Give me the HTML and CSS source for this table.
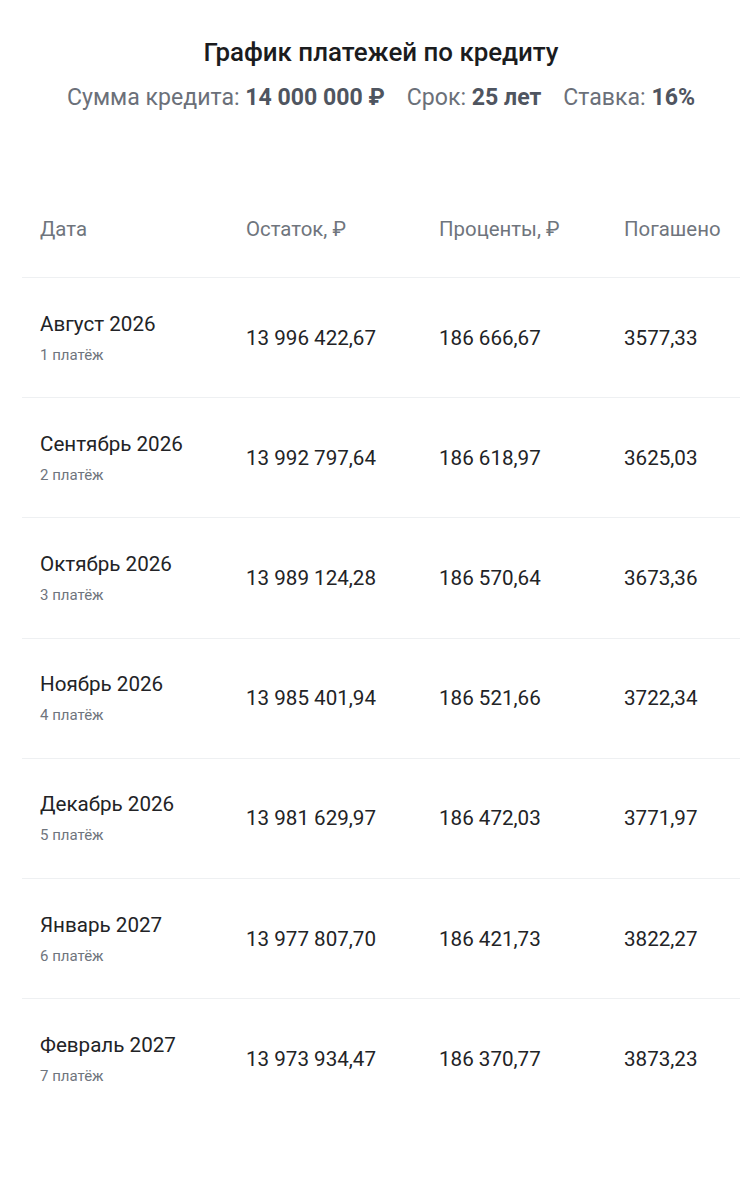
FILE: index.html
```html
<!DOCTYPE html>
<html lang="ru">
<head>
<meta charset="utf-8">
<title>График платежей по кредиту</title>
<link rel="stylesheet" href="styles.css">
</head>
<body>
<div class="page">
  <h1 class="title">График платежей по кредиту</h1>
  <p class="summary">
    <span class="item">Сумма кредита: <b>14 000 000 ₽</b></span>
    <span class="item">Срок: <b>25 лет</b></span>
    <span class="item">Ставка: <b>16%</b></span>
  </p>
  <div class="table">
    <div class="row head">
      <div class="cell">Дата</div>
      <div class="cell">Остаток, ₽</div>
      <div class="cell">Проценты, ₽</div>
      <div class="cell">Погашено</div>
    </div>
    <div class="row">
      <div class="cell date"><span class="month">Август 2026</span><span class="num">1 платёж</span></div>
      <div class="cell">13 996 422,67</div>
      <div class="cell">186 666,67</div>
      <div class="cell">3577,33</div>
    </div>
    <div class="row">
      <div class="cell date"><span class="month">Сентябрь 2026</span><span class="num">2 платёж</span></div>
      <div class="cell">13 992 797,64</div>
      <div class="cell">186 618,97</div>
      <div class="cell">3625,03</div>
    </div>
    <div class="row">
      <div class="cell date"><span class="month">Октябрь 2026</span><span class="num">3 платёж</span></div>
      <div class="cell">13 989 124,28</div>
      <div class="cell">186 570,64</div>
      <div class="cell">3673,36</div>
    </div>
    <div class="row">
      <div class="cell date"><span class="month">Ноябрь 2026</span><span class="num">4 платёж</span></div>
      <div class="cell">13 985 401,94</div>
      <div class="cell">186 521,66</div>
      <div class="cell">3722,34</div>
    </div>
    <div class="row">
      <div class="cell date"><span class="month">Декабрь 2026</span><span class="num">5 платёж</span></div>
      <div class="cell">13 981 629,97</div>
      <div class="cell">186 472,03</div>
      <div class="cell">3771,97</div>
    </div>
    <div class="row">
      <div class="cell date"><span class="month">Январь 2027</span><span class="num">6 платёж</span></div>
      <div class="cell">13 977 807,70</div>
      <div class="cell">186 421,73</div>
      <div class="cell">3822,27</div>
    </div>
    <div class="row">
      <div class="cell date"><span class="month">Февраль 2027</span><span class="num">7 платёж</span></div>
      <div class="cell">13 973 934,47</div>
      <div class="cell">186 370,77</div>
      <div class="cell">3873,23</div>
    </div>
  </div>
</div>
</body>
</html>
```
FILE: styles.css
```css
html, body {
  margin: 0;
  padding: 0;
  background: #ffffff;
}
body {
  font-family: Roboto, "Noto Sans", "Liberation Sans", sans-serif;
  color: #222326;
}
.page {
  padding: 36px 0 0 22px;
}
.title {
  margin: 0;
  text-align: center;
  font-size: 25.9px;
  line-height: 32px;
  font-weight: 500;
  color: #1b1c1e;
}
.summary {
  margin: 16px 0 0 0;
  display: flex;
  justify-content: center;
  gap: 22px;
  font-size: 23.1px;
  line-height: 28px;
  color: #6b7079;
}
.summary b {
  font-weight: 700;
  color: #4f5560;
}
.table {
  margin-top: 68px;
}
.row {
  display: grid;
  box-sizing: border-box;
  grid-template-columns: 206px 193px 185px 1fr;
  height: 120.2px;
  align-items: center;
  border-top: 1px solid #eef0f2;
  font-size: 20.6px;
  line-height: 26px;
}
.row.head {
  border-top: none;
  height: 97px;
  font-size: 20.4px;
  color: #6f757d;
}
.cell {
  padding-left: 18px;
  white-space: nowrap;
}
.date {
  display: flex;
  flex-direction: column;
  gap: 8px;
}
.month {
  line-height: 26px;
}
.num {
  font-size: 15px;
  line-height: 20px;
  color: #6f757d;
}
```
